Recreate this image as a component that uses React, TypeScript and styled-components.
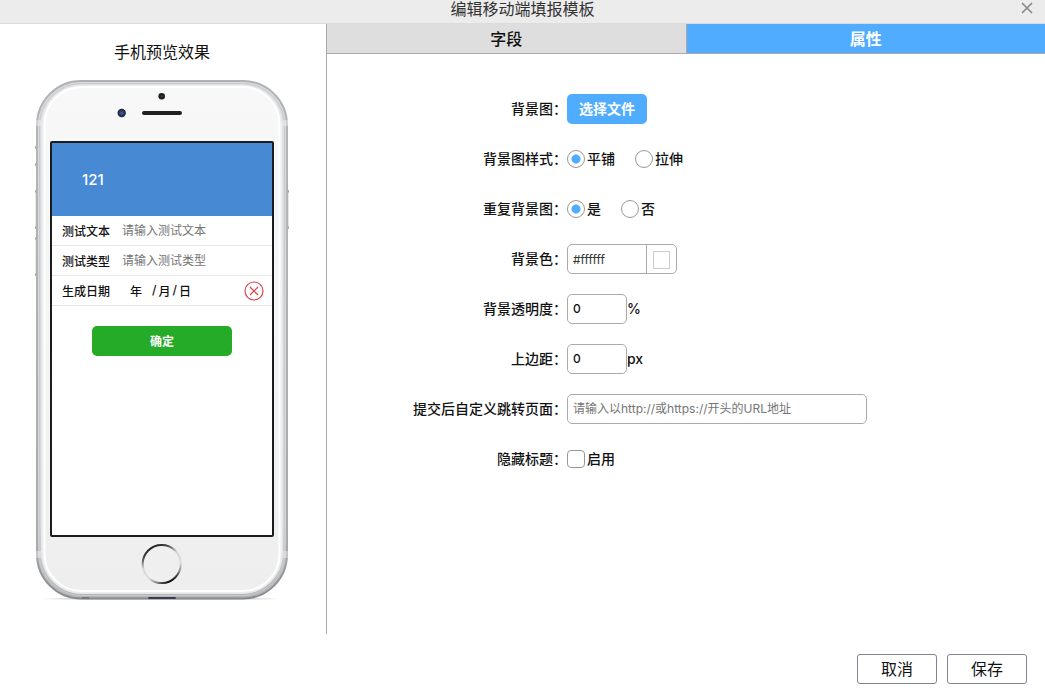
import React, { useState } from "react";
import styled, { createGlobalStyle } from "styled-components";

const GlobalStyle = createGlobalStyle`
  *, *::before, *::after { box-sizing: border-box; }
  body {
    margin: 0;
    background: #fff;
    color: #111;
  }
  body, button, input {
    font-family: Inter, "Noto Sans CJK SC", sans-serif;
  }
`;

const line = "#aaa";
const accent = "#4facfe";

const Dialog = styled.div`
  display: flex;
  flex-direction: column;
  min-height: 100vh;
`;

const TitleBar = styled.header`
  display: grid;
  grid-template-columns: 1fr auto 1fr;
  align-items: center;
  height: 24px;
  padding: 0 12px;
  background: #ececec;
  border-bottom: 1px solid #dcdcdc;
`;

const DialogTitle = styled.h1`
  grid-column: 2;
  margin: 0;
  padding-bottom: 5px;
  font-size: 16px;
  line-height: 18px;
  font-weight: 400;
  color: #333;
`;

const CloseButton = styled.button`
  display: flex;
  justify-self: end;
  padding: 0 0 8px;
  border: 0;
  background: none;
`;

const Body = styled.div`
  display: flex;
  flex: 1;
`;

const Preview = styled.aside`
  display: flex;
  flex-direction: column;
  align-items: center;
  flex: 0 0 327px;
  padding: 16px 2px 32px 0;
  border-right: 1px solid ${line};
`;

const PreviewTitle = styled.h2`
  margin: 0 0 16px;
  font-size: 16px;
  line-height: 24px;
  font-weight: 400;
`;

const Phone = styled.div`
  position: relative;
  width: 256px;
  height: 522px;
  padding: 61px 16px 64px;
`;

const PhoneArt = styled.svg`
  position: absolute;
  inset: 0;
`;

const Screen = styled.div`
  position: relative;
  height: 396px;
  border: 2px solid #1c1c1e;
  border-radius: 2px;
  background: #fff;
`;

const Banner = styled.div`
  display: flex;
  align-items: center;
  height: 73px;
  padding-left: 30px;
  background: #478ad3;
  color: #fff;
  font-size: 15px;
  font-weight: 500;
`;

const PreviewRow = styled.div`
  display: flex;
  align-items: center;
  height: 30px;
  padding: 0 8px 0 10px;
  border-bottom: 1px solid #e8e8e8;
  font-size: 12px;
`;

const PreviewLabel = styled.label`
  width: 60px;
  padding-bottom: 1px;
  font-weight: 500;
`;

const PreviewInput = styled.input`
  flex: 1;
  min-width: 0;
  padding: 0;
  border: 0;
  outline: 0;
  background: none;
  font-size: 12px;
  &::placeholder { color: #757575; }
`;

const DateParts = styled.span`
  display: flex;
  flex: 1;
  gap: 2px;
  padding: 0 0 1px 8px;
  font-weight: 500;
`;

const Year = styled.span`
  width: 20px;
`;

const ClearButton = styled.button`
  display: flex;
  padding: 0;
  border: 0;
  background: none;
`;

const SubmitButton = styled.button`
  display: block;
  width: 140px;
  height: 30px;
  margin: 20px auto 0;
  padding: 0 0 2px;
  border: 0;
  border-radius: 5px;
  background: #25ab28;
  color: #fff;
  font-size: 12px;
  font-weight: 700;
`;

const Settings = styled.main`
  flex: 1;
  min-width: 0;
`;

const Tabs = styled.div`
  display: flex;
  height: 30px;
  border-bottom: 1px solid ${line};
`;

const Tab = styled.button<{ $active?: boolean }>`
  flex: 1;
  padding: 0 0 2px;
  border: 0;
  border-right: ${(p) => (p.$active ? "0" : `1px solid ${line}`)};
  background: ${(p) => (p.$active ? accent : "#dedede")};
  color: ${(p) => (p.$active ? "#fff" : "#111")};
  font-size: 16px;
  font-weight: ${(p) => (p.$active ? 700 : 500)};
`;

const Form = styled.form`
  display: flex;
  flex-direction: column;
  gap: 20px;
  padding: 40px 20px 0 0;
`;

const Field = styled.div`
  display: grid;
  grid-template-columns: 240px 1fr;
  align-items: center;
  height: 30px;
  font-size: 14px;
`;

const FieldLabel = styled.label`
  padding-bottom: 3px;
  text-align: right;
  font-weight: 500;
`;

const Control = styled.div`
  display: flex;
  align-items: center;
`;

const FileButton = styled.button`
  width: 80px;
  height: 30px;
  padding: 0 0 2px;
  border: 0;
  border-radius: 5px;
  background: ${accent};
  color: #fff;
  font-size: 14px;
  font-weight: 700;
`;

const Choice = styled.label`
  display: flex;
  align-items: center;
  gap: 2px;
  margin-right: 20px;
  font-weight: 500;
`;

const ChoiceText = styled.span`
  padding-bottom: 2px;
`;

const Radio = styled.input`
  appearance: none;
  width: 18px;
  height: 18px;
  margin: 0;
  border: 1px solid #999;
  border-radius: 50%;
  background: #fff;
  &:checked {
    background: radial-gradient(circle, ${accent} 4px, #fff 5px);
  }
`;

const Checkbox = styled.input`
  appearance: none;
  width: 18px;
  height: 18px;
  margin: 0;
  border: 1px solid #999;
  border-radius: 4px;
  background: #fff;
  &:checked { background: ${accent}; }
`;

const TextInput = styled.input<{ $width: number }>`
  width: ${(p) => p.$width}px;
  height: 30px;
  padding: 0 5px 1px;
  border: 1px solid ${line};
  border-radius: 5px;
  outline: 0;
  background: #fff;
  color: #111;
  font-size: 12px;
  font-weight: 500;
  &::placeholder {
    color: #757575;
    font-weight: 400;
  }
`;

const ColorGroup = styled.div`
  display: flex;
  width: 110px;
  height: 30px;
  border: 1px solid ${line};
  border-radius: 5px;
`;

const ColorText = styled.input`
  width: 79px;
  padding: 0 5px;
  border: 0;
  border-right: 1px solid ${line};
  outline: 0;
  background: none;
  color: #333;
  font-size: 12px;
`;

const ColorSwatch = styled.input`
  appearance: none;
  width: 18px;
  height: 18px;
  margin: 6px;
  padding: 0;
  border: 1px solid #ccc;
  background: #fff;
  &::-webkit-color-swatch-wrapper { padding: 0; }
  &::-webkit-color-swatch { border: 0; }
`;

const Unit = styled.span`
  padding-bottom: 2px;
  font-weight: 500;
`;

const Footer = styled.footer`
  display: flex;
  justify-content: flex-end;
  gap: 10px;
  padding: 20px 18px 15px;
`;

const FooterButton = styled.button`
  width: 80px;
  height: 30px;
  padding: 0 0 2px;
  border: 1px solid #7f8495;
  border-radius: 3px;
  background: #fff;
  color: #111;
  font-size: 16px;
`;

const PhoneFrame = () => (
  <PhoneArt width="256" height="522" viewBox="34 80 256 522" aria-hidden="true">
    <defs>
      <linearGradient id="rim" x1="0" y1="0" x2="0" y2="1">
        <stop offset="0" stopColor="#b0b1b3" />
        <stop offset="0.1" stopColor="#b4b5b8" />
        <stop offset="0.9" stopColor="#a9aaad" />
        <stop offset="1" stopColor="#88898e" />
      </linearGradient>
      <linearGradient id="metal" x1="0" y1="0" x2="0" y2="1">
        <stop offset="0" stopColor="#dadbdd" />
        <stop offset="0.85" stopColor="#d6d7d9" />
        <stop offset="1" stopColor="#b4b5b8" />
      </linearGradient>
      <linearGradient id="face" x1="0" y1="0" x2="0" y2="1">
        <stop offset="0" stopColor="#f8f8f8" />
        <stop offset="0.5" stopColor="#f4f4f4" />
        <stop offset="1" stopColor="#eeeeee" />
      </linearGradient>
      <linearGradient id="home" x1="0.2" y1="0" x2="0.7" y2="1">
        <stop offset="0" stopColor="#111" />
        <stop offset="0.2" stopColor="#444" />
        <stop offset="0.42" stopColor="#d5d5d5" />
        <stop offset="0.7" stopColor="#ddd" />
        <stop offset="0.86" stopColor="#888" />
        <stop offset="0.97" stopColor="#111" />
      </linearGradient>
      <linearGradient id="shadow">
        <stop offset="0" stopColor="#fff" />
        <stop offset="0.2" stopColor="#bbb" />
        <stop offset="0.8" stopColor="#bbb" />
        <stop offset="1" stopColor="#fff" />
      </linearGradient>
      <radialGradient id="lens">
        <stop offset="0" stopColor="#4263a5" />
        <stop offset="0.5" stopColor="#2b3f70" />
        <stop offset="1" stopColor="#1b1b20" />
      </radialGradient>
    </defs>
    <rect x="42" y="598" width="238" height="1.5" fill="url(#shadow)" />
    <g fill="#a0a1a4">
      <rect x="35" y="146" width="2" height="3" rx="1" />
      <rect x="35" y="163" width="2" height="3" rx="1" />
      <rect x="35" y="190" width="2" height="3" rx="1" />
      <rect x="35" y="226" width="2" height="3" rx="1" />
      <rect x="35" y="237" width="2" height="3" rx="1" />
      <rect x="35" y="273" width="2" height="3" rx="1" />
      <rect x="287" y="190" width="2" height="3" rx="1" />
      <rect x="287" y="226" width="2" height="3" rx="1" />
    </g>
    <g fill="#cfd0d2">
      <rect x="35.500" y="192" width="2" height="35" />
      <rect x="35.500" y="239" width="2" height="35" />
      <rect x="286.500" y="192" width="2" height="35" />
    </g>
    <rect x="37" y="81" width="250" height="517.500" rx="44" fill="url(#metal)" stroke="url(#rim)" strokeWidth="2" />
    <rect x="39.500" y="83.500" width="245" height="512" rx="42" fill="none" stroke="#c9cacd" />
    <rect x="41.500" y="85" width="241" height="508.500" rx="40" fill="#ededee" stroke="#e6e7e9" />
    <rect x="44.500" y="87" width="235" height="504" rx="37" fill="url(#face)" stroke="#fff" strokeWidth="2" />
    <g fill="#fff" opacity="0.35">
      <rect x="36" y="120" width="5" height="6" />
      <rect x="283" y="120" width="5" height="6" />
      <rect x="36" y="551" width="5" height="7" />
      <rect x="283" y="551" width="5" height="7" />
    </g>
    <circle cx="161.700" cy="96.300" r="3.300" fill="#1d1c1f" />
    <circle cx="161.700" cy="96.300" r="1" fill="#41414a" />
    <circle cx="121.700" cy="113" r="4.200" fill="url(#lens)" />
    <rect x="142" y="111" width="40" height="4" rx="2" fill="#202022" />
    <circle cx="161.700" cy="564" r="19" fill="#efefef" stroke="url(#home)" strokeWidth="2" />
    <rect x="82" y="597" width="7" height="2" fill="#77787e" />
    <rect x="148" y="597" width="28" height="2" rx="1" fill="#3d3c4d" />
  </PhoneArt>
);

export default function App() {
  const [tile, setTile] = useState("tile");
  const [repeat, setRepeat] = useState("yes");
  const [color, setColor] = useState("#ffffff");

  return (
    <>
      <GlobalStyle />
      <Dialog>
        <TitleBar>
          <DialogTitle>编辑移动端填报模板</DialogTitle>
          <CloseButton type="button" aria-label="关闭">
            <svg width="12" height="12" viewBox="0 0 12 12">
              <path d="M1 1L11 11M11 1L1 11" stroke="#888" strokeWidth="1.6" />
            </svg>
          </CloseButton>
        </TitleBar>
        <Body>
          <Preview>
            <PreviewTitle>手机预览效果</PreviewTitle>
            <Phone>
              <PhoneFrame />
              <Screen>
                <Banner>121</Banner>
                <PreviewRow>
                  <PreviewLabel htmlFor="p-text">测试文本</PreviewLabel>
                  <PreviewInput id="p-text" placeholder="请输入测试文本" />
                </PreviewRow>
                <PreviewRow>
                  <PreviewLabel htmlFor="p-type">测试类型</PreviewLabel>
                  <PreviewInput id="p-type" placeholder="请输入测试类型" />
                </PreviewRow>
                <PreviewRow>
                  <PreviewLabel as="span">生成日期</PreviewLabel>
                  <DateParts>
                    <Year>年</Year>
                    <span>/</span>
                    <span>月</span>
                    <span>/</span>
                    <span>日</span>
                  </DateParts>
                  <ClearButton type="button" aria-label="清除">
                    <svg width="20" height="20" viewBox="0 0 20 20" fill="none" stroke="#d9434b" strokeWidth="1.2">
                      <circle cx="10" cy="10" r="9" />
                      <path d="M6 6L14 14M14 6L6 14" />
                    </svg>
                  </ClearButton>
                </PreviewRow>
                <SubmitButton type="button">确定</SubmitButton>
              </Screen>
            </Phone>
          </Preview>
          <Settings>
            <Tabs role="tablist">
              <Tab type="button" role="tab" aria-selected="false">字段</Tab>
              <Tab type="button" role="tab" aria-selected="true" $active>属性</Tab>
            </Tabs>
            <Form>
              <Field>
                <FieldLabel htmlFor="bg-file">背景图：</FieldLabel>
                <Control>
                  <FileButton id="bg-file" type="button">选择文件</FileButton>
                </Control>
              </Field>
              <Field>
                <FieldLabel as="span">背景图样式：</FieldLabel>
                <Control>
                  <Choice>
                    <Radio type="radio" name="style" checked={tile === "tile"} onChange={() => setTile("tile")} />
                    <ChoiceText>平铺</ChoiceText>
                  </Choice>
                  <Choice>
                    <Radio type="radio" name="style" checked={tile === "stretch"} onChange={() => setTile("stretch")} />
                    <ChoiceText>拉伸</ChoiceText>
                  </Choice>
                </Control>
              </Field>
              <Field>
                <FieldLabel as="span">重复背景图：</FieldLabel>
                <Control>
                  <Choice>
                    <Radio type="radio" name="repeat" checked={repeat === "yes"} onChange={() => setRepeat("yes")} />
                    <ChoiceText>是</ChoiceText>
                  </Choice>
                  <Choice>
                    <Radio type="radio" name="repeat" checked={repeat === "no"} onChange={() => setRepeat("no")} />
                    <ChoiceText>否</ChoiceText>
                  </Choice>
                </Control>
              </Field>
              <Field>
                <FieldLabel htmlFor="bg-color">背景色：</FieldLabel>
                <Control>
                  <ColorGroup>
                    <ColorText id="bg-color" value={color} onChange={(e) => setColor(e.target.value)} />
                    <ColorSwatch type="color" aria-label="选择背景色" value={color} onChange={(e) => setColor(e.target.value)} />
                  </ColorGroup>
                </Control>
              </Field>
              <Field>
                <FieldLabel htmlFor="opacity">背景透明度：</FieldLabel>
                <Control>
                  <TextInput id="opacity" $width={60} defaultValue="0" />
                  <Unit>%</Unit>
                </Control>
              </Field>
              <Field>
                <FieldLabel htmlFor="top">上边距：</FieldLabel>
                <Control>
                  <TextInput id="top" $width={60} defaultValue="0" />
                  <Unit>px</Unit>
                </Control>
              </Field>
              <Field>
                <FieldLabel htmlFor="url">提交后自定义跳转页面：</FieldLabel>
                <Control>
                  <TextInput id="url" $width={300} placeholder="请输入以http://或https://开头的URL地址" />
                </Control>
              </Field>
              <Field>
                <FieldLabel htmlFor="hide-title">隐藏标题：</FieldLabel>
                <Control>
                  <Choice>
                    <Checkbox id="hide-title" type="checkbox" />
                    <ChoiceText>启用</ChoiceText>
                  </Choice>
                </Control>
              </Field>
            </Form>
          </Settings>
        </Body>
        <Footer>
          <FooterButton type="button">取消</FooterButton>
          <FooterButton type="button">保存</FooterButton>
        </Footer>
      </Dialog>
    </>
  );
}
